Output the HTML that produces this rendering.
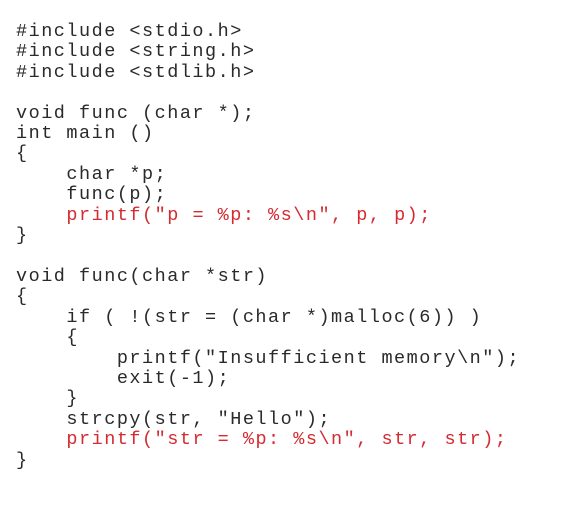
<!DOCTYPE html>
<html><head><style>
html,body{margin:0;padding:0;background:#fff;width:577px;height:523px;overflow:hidden}
pre{position:absolute;left:16px;top:22px;margin:0;font-family:"Liberation Mono",monospace;font-size:18.5px;letter-spacing:1.5px;line-height:20.4px;color:#2a2a2a;}
.r{color:#d42a30}
</style></head><body>
<pre>#include &lt;stdio.h&gt;
#include &lt;string.h&gt;
#include &lt;stdlib.h&gt;

void func (char *);
int main ()
{
    char *p;
    func(p);
    <span class="r">printf("p = %p: %s\n", p, p);</span>
}

void func(char *str)
{
    if ( !(str = (char *)malloc(6)) )
    {
        printf("Insufficient memory\n");
        exit(-1);
    }
    strcpy(str, "Hello");
    <span class="r">printf("str = %p: %s\n", str, str);</span>
}</pre>
</body></html>
